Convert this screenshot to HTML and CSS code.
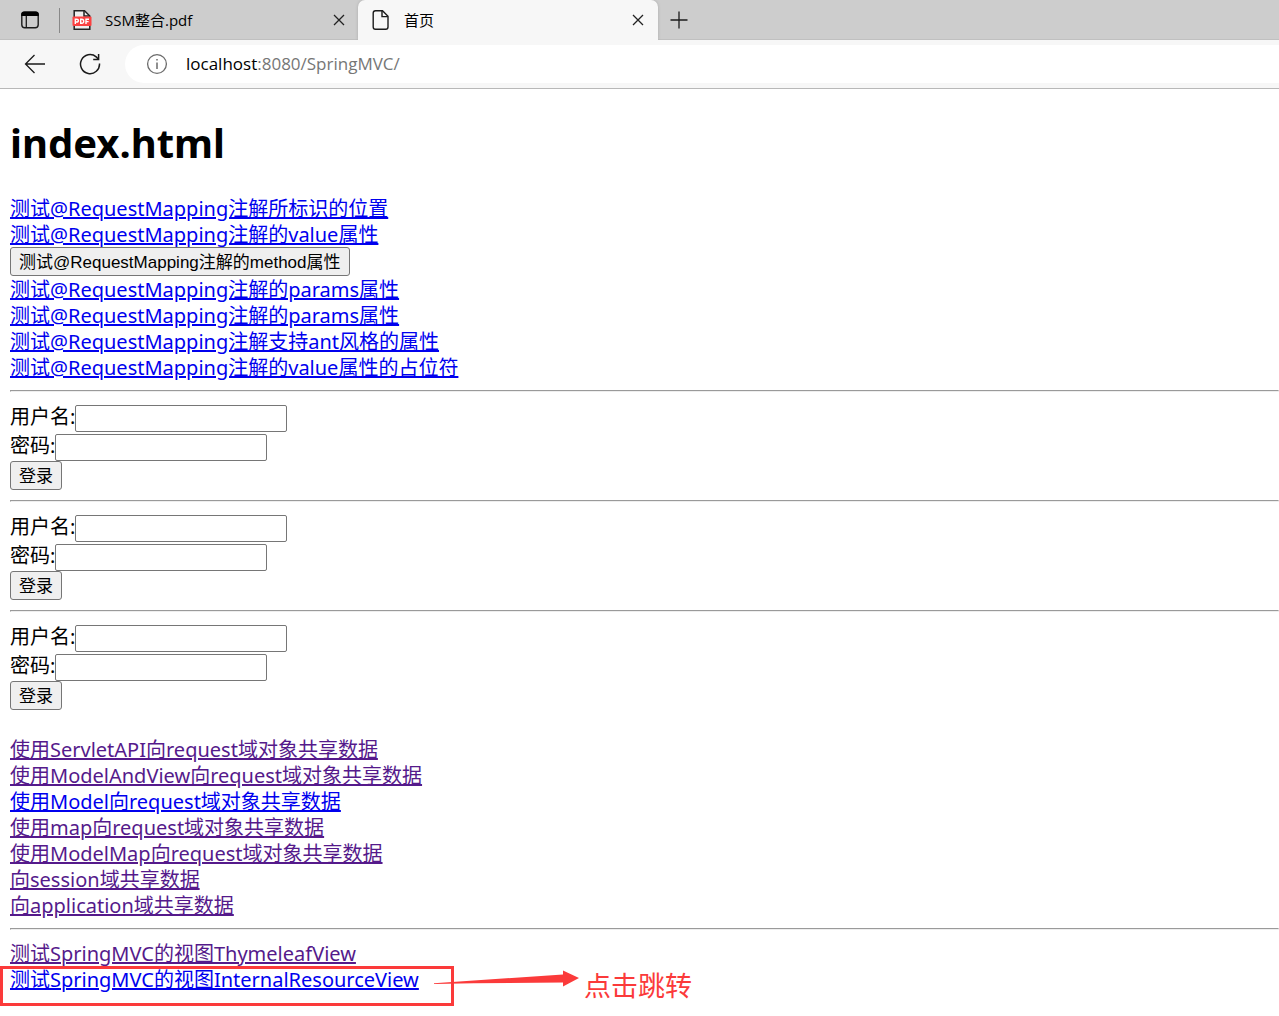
FILE: index.html
```html
<!DOCTYPE html>
<html lang="zh-CN">
<head>
<meta charset="utf-8">
<title>首页</title>
<link rel="stylesheet" href="styles.css">
</head>
<body>
<header>
  <div class="tabs">
    <button class="icon-button menu" aria-label="Tab actions">
      <svg width="20" height="20" viewBox="0 0 20 20"><rect x="1.8" y="2.3" width="16.4" height="15.4" rx="3" fill="none" stroke="#1b1b1b" stroke-width="1.4"/><path d="M1.2 6V4.5Q1.2 1.6 4 1.6H16Q18.8 1.6 18.8 4.5V6Z" fill="#000"/><path d="M6.3 6V17.5" stroke="#1b1b1b" stroke-width="1.3"/></svg>
    </button>
    <div class="tab first">
      <svg width="20" height="22" viewBox="0 0 20 22"><path d="M2.2 1.7H12.5L17.8 7V20.3H2.2Z" fill="#eee" stroke="#222" stroke-width="1.5"/><path d="M12 1.5V7H18" fill="none" stroke="#222" stroke-width="1.5"/><rect x="0.5" y="7.5" width="19" height="9.5" rx="1" fill="#fb4141"/><g fill="none" stroke="#fff" stroke-width="1.4"><path d="M3.3 15V10.2H4.8Q6.4 10.2 6.4 11.6T4.8 13H3.3M8.7 14.3V10.2H9.6Q11.7 10.2 11.7 12.3T9.6 14.3ZM14 15V10.2H17M14 12.6H16.6"/></g></svg>
      <span>SSM整合.pdf</span>
      <button class="icon-button close" aria-label="Close SSM整合.pdf"><svg width="12" height="12" viewBox="0 0 12 12"><path d="M1 1L11 11M11 1L1 11" stroke="#222" stroke-width="1.3"/></svg></button>
    </div>
    <div class="tab active">
      <svg width="20" height="22" viewBox="0 0 20 22"><path d="M5 1.7H11.5L17 7.2V18Q17 20.3 14.7 20.3H4.5Q2.2 20.3 2.2 18V4Q2.2 1.7 4.5 1.7Z" fill="none" stroke="#1b1b1b" stroke-width="1.4"/><path d="M11 2V7.6H16.8" fill="none" stroke="#1b1b1b" stroke-width="1.4"/></svg>
      <span>首页</span>
      <button class="icon-button close" aria-label="Close 首页"><svg width="12" height="12" viewBox="0 0 12 12"><path d="M1 1L11 11M11 1L1 11" stroke="#222" stroke-width="1.3"/></svg></button>
    </div>
    <button class="icon-button new-tab" aria-label="New tab"><svg width="18" height="18" viewBox="0 0 18 18"><path d="M9 0.5V17.5M0.5 9H17.5" stroke="#1b1b1b" stroke-width="1.3"/></svg></button>
  </div>
  <nav class="toolbar">
    <button class="icon-button" aria-label="Back"><svg width="22" height="22" viewBox="0 0 22 22"><path d="M21 11H1.5M10.5 2L1.5 11L10.5 20" fill="none" stroke="#1b1b1b" stroke-width="1.3"/></svg></button>
    <button class="icon-button" aria-label="Reload"><svg width="22" height="22" viewBox="0 0 22 22"><path d="M20.5 10.5A9.5 9.5 0 1 1 17.2 3.9L19.3 6" fill="none" stroke="#1b1b1b" stroke-width="1.5"/><path d="M19.6 1V6.5H14.2" fill="none" stroke="#1b1b1b" stroke-width="1.5"/></svg></button>
    <div class="address">
      <svg width="22" height="22" viewBox="0 0 22 22"><circle cx="11" cy="11" r="9.4" fill="none" stroke="#6b6b6b" stroke-width="1.3"/><path d="M11 9.5V16M11 6V7.6" stroke="#6b6b6b" stroke-width="1.5"/></svg>
      <span><b>localhost</b>:8080/SpringMVC/</span>
    </div>
  </nav>
</header>
<main>
  <h1>index.html</h1>
  <div class="links">
    <a href="#">测试@RequestMapping注解所标识的位置</a>
    <a href="#">测试@RequestMapping注解的value属性</a>
    <button class="submit">测试@RequestMapping注解的method属性</button>
    <a href="#">测试@RequestMapping注解的params属性</a>
    <a href="#">测试@RequestMapping注解的params属性</a>
    <a href="#">测试@RequestMapping注解支持ant风格的属性</a>
    <a href="#">测试@RequestMapping注解的value属性的占位符</a>
  </div>
  <hr>
  <form>
    <div class="field"><label for="user1">用户名:</label><input type="text" id="user1"></div>
    <div class="field"><label for="pass1">密码:</label><input type="password" id="pass1"></div>
    <button class="submit" type="button">登录</button>
  </form>
  <hr>
  <form>
    <div class="field"><label for="user2">用户名:</label><input type="text" id="user2"></div>
    <div class="field"><label for="pass2">密码:</label><input type="password" id="pass2"></div>
    <button class="submit" type="button">登录</button>
  </form>
  <hr>
  <form>
    <div class="field"><label for="user3">用户名:</label><input type="text" id="user3"></div>
    <div class="field"><label for="pass3">密码:</label><input type="password" id="pass3"></div>
    <button class="submit" type="button">登录</button>
  </form>
  <div class="links scope">
    <a class="visited" href="#">使用ServletAPI向request域对象共享数据</a>
    <a class="visited" href="#">使用ModelAndView向request域对象共享数据</a>
    <a href="#">使用Model向request域对象共享数据</a>
    <a class="visited" href="#">使用map向request域对象共享数据</a>
    <a class="visited" href="#">使用ModelMap向request域对象共享数据</a>
    <a class="visited" href="#">向session域共享数据</a>
    <a class="visited" href="#">向application域共享数据</a>
  </div>
  <hr>
  <div class="links">
    <a class="visited" href="#">测试SpringMVC的视图ThymeleafView</a>
    <div class="marked">
      <a href="#">测试SpringMVC的视图InternalResourceView</a>
      <div class="outline"></div>
      <div class="callout">
        <svg width="146" height="18" viewBox="0 0 146 18"><path d="M0 13.2L129 4.5V0.5L145 8L129 16.5V12.5L40 13.2L0 14Z" fill="#fb3a3a"/></svg>
        <span>点击跳转</span>
      </div>
    </div>
  </div>
</main>
</body>
</html>
```
FILE: styles.css
```css
* { box-sizing: border-box; }
body {
  margin: 0;
  background: #fff;
  color: #000;
  font: 20px/26px "Noto Sans", "Noto Sans CJK SC", sans-serif;
}
button, input { font-family: "Liberation Sans", "Noto Sans CJK SC", sans-serif; }
svg { display: block; flex: none; }

/* Browser frame */
header { background: #f7f7f7; border-bottom: 1px solid #b8b8b8; }
.icon-button { display: flex; padding: 0; border: 0; background: none; }
.tabs {
  display: flex;
  align-items: center;
  height: 40px;
  background: #cdcdcd;
  box-shadow: inset 0 -1px #c0c0c0;
}
.menu { margin: 0 19px 0 20px; }
.tab {
  display: flex;
  align-items: center;
  gap: 13px;
  width: 300px;
  height: 40px;
  padding: 0 14px 0 13px;
  font: 15px/20px "Open Sans", "Noto Sans CJK SC", sans-serif;
}
.tab.first { height: 25px; width: 299px; padding: 0 13px 0 12px; border-left: 1px solid #888; }
.tab.active { background: #f7f7f7; border-radius: 7px 7px 0 0; box-shadow: 0 0 3px #aaa; clip-path: inset(0 -3px 0 -3px); }
.close { margin-left: auto; }
.new-tab { margin-left: 12px; }
.toolbar {
  display: flex;
  align-items: center;
  gap: 33px;
  height: 48px;
  padding-left: 24px;
}
.address {
  display: flex;
  flex: 1;
  align-items: center;
  gap: 18px;
  height: 38px;
  margin-left: -9px;
  padding-left: 21px;
  background: #fff;
  border-radius: 19px 0 0 19px;
  color: #767676;
  font: 17px/24px "Open Sans", "Noto Sans CJK SC", sans-serif;
}
.address b { color: #000; font-weight: 400; }

/* Page */
main { padding: 28px 0 20px 10px; }
h1 { margin: 0 0 26px; font: 700 40px/52px "Noto Sans", sans-serif; }
.links { display: flex; flex-direction: column; align-items: flex-start; }
.links a { display: block; height: 26px; color: #00e; line-height: 28px; }
.links .visited { color: #551a8b; }
.scope { margin-top: 26px; }
hr { margin: 10px 0; border: 1px inset #eee; }
form { padding-top: 1px; }
.field { display: flex; height: 29px; line-height: 27px; }
.field input {
  align-self: flex-end;
  width: 212px;
  height: 27px;
  border: 1px solid #767676;
  border-radius: 2px;
  background: #fff;
}
.submit {
  display: block;
  height: 29px;
  padding: 2px 8px 0;
  border: 1px solid #767676;
  border-radius: 3px;
  background: #efefef;
  color: #000;
  font-size: 17px;
  line-height: 25px;
}

/* Annotation over the last link */
.marked { position: relative; }
.outline {
  position: absolute;
  top: 0;
  left: -10px;
  width: 454px;
  height: 40px;
  border: 3px solid #fb3a3a;
  pointer-events: none;
}
.callout {
  position: absolute;
  top: 4px;
  left: 424px;
  display: flex;
  gap: 4px;
  color: #fb3a3a;
  font-size: 27px;
  line-height: 32px;
  white-space: nowrap;
}
```
